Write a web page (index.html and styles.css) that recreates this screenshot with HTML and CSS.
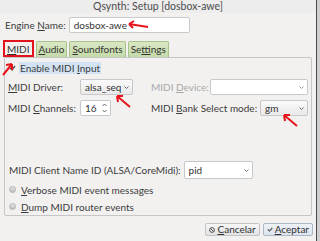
FILE: index.html
```html
<!DOCTYPE html>
<html lang="es">
<head>
    <meta charset="UTF-8">
    <title>Qsynth: Setup [dosbox-awe]</title>
    <link rel="stylesheet" href="styles.css">
</head>
<body>
    <div class="window">
        <div class="titlebar">Qsynth: Setup [dosbox-awe]</div>

        <div class="engine-row">
            <span class="label">Engine <u>N</u>ame:</span>
            <div class="field engine-field">dosbox-awe</div>
        </div>

        <div class="tabs">
            <div class="tab active"><u>M</u>IDI</div>
            <div class="tab"><u>A</u>udio</div>
            <div class="tab"><u>S</u>oundfonts</div>
            <div class="tab">Se<u>t</u>tings</div>
        </div>

        <div class="panel">
            <div class="check-row first">
                <svg class="tick" width="7" height="6" viewBox="0 0 7 6"><path d="M1 3 L3 5 L6 1" stroke="#555" stroke-width="1.4" fill="none"/></svg>
                <span class="check-label selected">Enable MIDI <u>I</u>nput</span>
            </div>

            <div class="grid-row">
                <span class="label col-a"><u>M</u>IDI Driver:</span>
                <div class="combo driver">alsa_seq <svg class="caret" width="5" height="3" viewBox="0 0 5 3"><path d="M0.5 0.5 L2.5 2.5 L4.5 0.5" stroke="#666" fill="none"/></svg></div>
                <span class="label disabled col-b">MIDI <u>D</u>evice:</span>
                <div class="combo device"><svg class="caret" width="5" height="3" viewBox="0 0 5 3"><path d="M0.5 0.5 L2.5 2.5 L4.5 0.5" stroke="#999" fill="none"/></svg></div>
            </div>

            <div class="grid-row">
                <span class="label col-a">MIDI <u>C</u>hannels:</span>
                <div class="spin">16
                    <svg class="spin-arrows" width="5" height="10" viewBox="0 0 5 10"><path d="M0.5 3 L2.5 1 L4.5 3 M0.5 7 L2.5 9 L4.5 7" stroke="#666" fill="none"/></svg>
                </div>
                <span class="label col-b">MIDI <u>B</u>ank Select mode:</span>
                <div class="combo bank">gm <svg class="caret" width="5" height="3" viewBox="0 0 5 3"><path d="M0.5 0.5 L2.5 2.5 L4.5 0.5" stroke="#666" fill="none"/></svg></div>
            </div>

            <div class="spacer"></div>

            <div class="client-row">
                <span class="label">MIDI Client Name ID (ALSA/CoreMidi):</span>
                <div class="combo client">pid <svg class="caret" width="5" height="3" viewBox="0 0 5 3"><path d="M0.5 0.5 L2.5 2.5 L4.5 0.5" stroke="#777" fill="none"/></svg></div>
            </div>

            <div class="check-row">
                <span class="radio"></span>
                <span class="check-label"><u>V</u>erbose MIDI event messages</span>
            </div>
            <div class="check-row">
                <span class="radio"></span>
                <span class="check-label"><u>D</u>ump MIDI router events</span>
            </div>
        </div>

        <div class="buttons">
            <div class="btn">
                <svg class="btn-icon" width="6" height="6" viewBox="0 0 6 6"><circle cx="3" cy="3" r="2.4" stroke="#555" fill="none"/><path d="M1.5 1.5 L4.5 4.5" stroke="#555"/></svg>
                <span><u>C</u>ancelar</span>
            </div>
            <div class="btn default">
                <svg class="btn-icon" width="6" height="5" viewBox="0 0 6 5"><path d="M0.8 2.5 L2.5 4 L5.3 0.8" stroke="#555" stroke-width="1.2" fill="none"/></svg>
                <span><u>A</u>ceptar</span>
            </div>
        </div>

        <!-- flechas rojas de la captura -->
        <svg class="arrow a1" width="24" height="10" viewBox="0 0 24 10"><path d="M22 7 L3 4 M3 4 L8 1 M3 4 L7 8" stroke="#e8141b" stroke-width="2" fill="none"/></svg>
        <svg class="arrow a2" width="14" height="16" viewBox="0 0 14 16"><path d="M2 14 L11 3 M11 3 L5 4 M11 3 L11 9" stroke="#e8141b" stroke-width="2" fill="none"/></svg>
        <svg class="arrow a3" width="18" height="16" viewBox="0 0 18 16"><path d="M16 14 L3 3 M3 3 L9 3 M3 3 L4 9" stroke="#e8141b" stroke-width="2" fill="none"/></svg>
        <svg class="arrow a4" width="18" height="16" viewBox="0 0 18 16"><path d="M16 14 L3 3 M3 3 L9 3 M3 3 L4 9" stroke="#e8141b" stroke-width="2" fill="none"/></svg>
    </div>
    <div class="desktop"></div>
</body>
</html>
```

FILE: styles.css
```css
* {
    margin: 0;
    padding: 0;
    box-sizing: border-box;
}

body {
    font-family: Lato, "Noto Sans", sans-serif;
    font-size: 10px;
    color: #3c3c3c;
    background-color: #d8d8d8;
    display: flex;
    width: 320px;
    height: 241px;
    overflow: hidden;
}

u {
    text-decoration-thickness: 1px;
    text-underline-offset: 1px;
}

.window {
    position: relative;
    width: 317px;
    height: 241px;
    background-color: #f2f1f0;
    border-right: 1px solid #4a4a4a;
    display: flex;
    flex-direction: column;
}

.desktop {
    flex-grow: 1;
    background-color: #cfcfcf;
}

.titlebar {
    height: 13px;
    line-height: 12px;
    text-align: center;
    font-size: 10.5px;
    color: #4c4c4c;
    background-color: #ededed;
}

.engine-row {
    display: flex;
    align-items: center;
    gap: 3px;
    padding-left: 5px;
    margin-top: 4px;
    height: 16px;
}

.field,
.combo,
.spin {
    height: 16px;
    line-height: 14px;
    border: 1px solid #c8c8c8;
    border-radius: 2px;
    background-color: #fff;
    padding-left: 4px;
    color: #333;
    font-size: 10px;
}

.engine-field {
    width: 121px;
}

.tabs {
    display: flex;
    gap: 2px;
    padding-left: 3px;
    margin-top: 7px;
    height: 17px;
    align-items: flex-end;
}

.tab {
    height: 16px;
    line-height: 15px;
    padding: 0 2px;
    font-size: 10px;
    color: #333;
    background: linear-gradient(#d9e8c4, #c4d9a8);
    border: 1px solid #a9c28b;
    border-bottom: none;
    border-radius: 2px 2px 0 0;
}

.tab.active {
    height: 17px;
    background: #f2f1f0;
    border: 2px solid #e3131b;
    border-radius: 0;
    padding: 0 2px;
}

.panel {
    margin: 0 4px 0 4px;
    height: 159px;
    border: 1px solid #c6c6c6;
    border-radius: 0 2px 2px 2px;
    display: flex;
    flex-direction: column;
    padding: 0 3px;
}

.check-row {
    display: flex;
    align-items: center;
    gap: 4px;
    height: 17px;
}

.check-row.first {
    margin-top: 4px;
    height: 12px;
    gap: 3px;
}

.tick {
    margin-left: 1px;
}

.check-label {
    font-size: 10px;
    color: #3c3c3c;
}

.check-label.selected {
    background-color: #d3e3f3;
    padding: 0 1px;
}

.radio {
    width: 7px;
    height: 7px;
    margin-left: 1px;
    margin-right: 1px;
    border-radius: 50%;
    background: linear-gradient(#e6e6e6, #bdbdbd);
    border: 1px solid #b0b0b0;
}

.grid-row {
    display: grid;
    grid-template-columns: 72px 71px 1fr auto;
    align-items: center;
    margin-top: 5px;
}

.label {
    font-size: 10px;
    color: #3c3c3c;
    white-space: nowrap;
}

.label.disabled {
    color: #a8a8a8;
}

.combo {
    display: flex;
    justify-content: space-between;
    align-items: center;
    padding-right: 3px;
    background: linear-gradient(#fafafa, #e9e9e9);
}

.driver {
    width: 53px;
}

.device {
    width: 98px;
    background: #fff;
    justify-content: flex-end;
}

.bank {
    width: 48px;
}

.spin {
    width: 31px;
    display: flex;
    justify-content: space-between;
    align-items: center;
    padding-right: 3px;
}

.spacer {
    flex-grow: 1;
}

.client-row {
    display: flex;
    align-items: center;
    gap: 3px;
    padding-left: 1px;
    margin-bottom: 2px;
}

.client {
    width: 69px;
    height: 18px;
    line-height: 16px;
    background: #fff;
}

.buttons {
    display: flex;
    justify-content: flex-end;
    gap: 3px;
    padding-right: 3px;
    margin-top: 7px;
}

.btn {
    height: 13px;
    line-height: 11px;
    padding: 0 3px;
    font-size: 10px;
    color: #333;
    background: linear-gradient(#f7f7f7, #e2e2e2);
    border: 1px solid #c4c4c4;
    border-radius: 2px;
    display: flex;
    align-items: center;
    gap: 2px;
}

.btn.default {
    background: linear-gradient(#eef2f7, #dbe3ec);
    border-color: #aab8c8;
}

.arrow {
    position: absolute;
}

.a1 {
    left: 126px;
    top: 20px;
}

.a2 {
    left: 1px;
    top: 61px;
}

.a3 {
    left: 114px;
    top: 93px;
}

.a4 {
    left: 281px;
    top: 112px;
}
```
